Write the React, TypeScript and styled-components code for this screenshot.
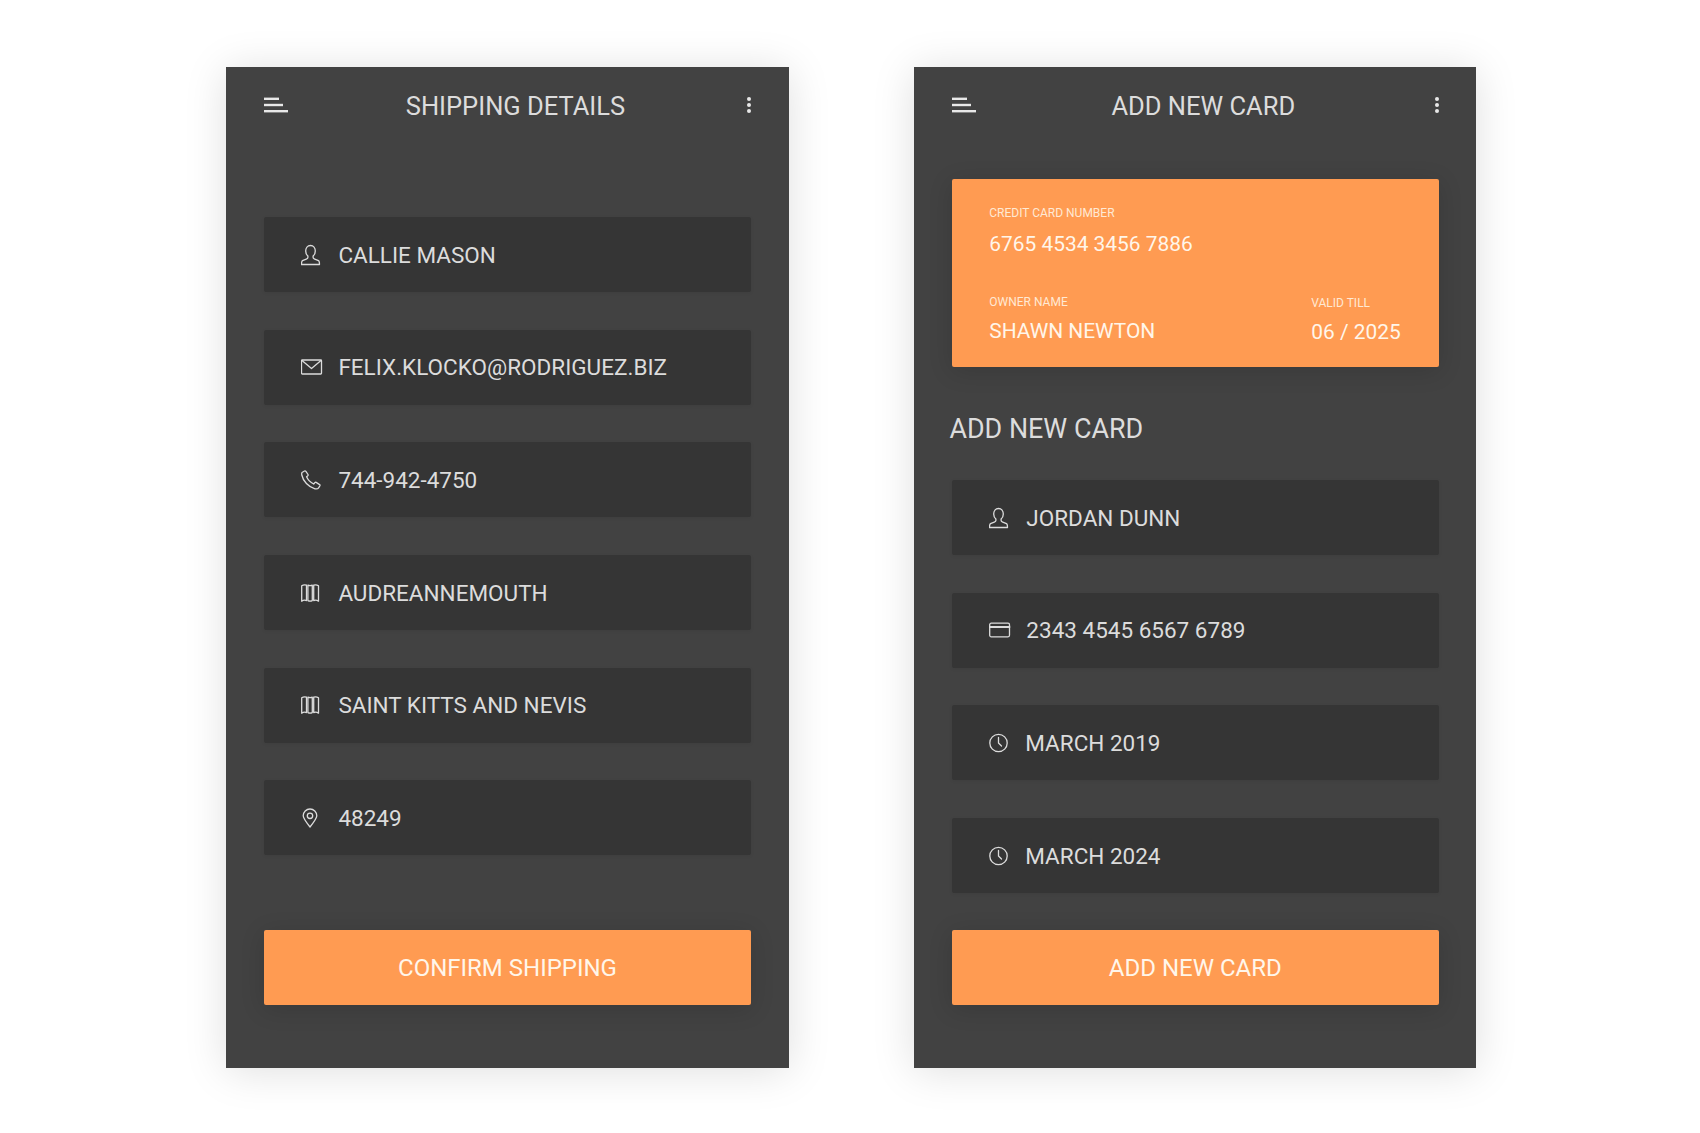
import * as React from 'react';
import { FC, ReactNode } from 'react';
import styled, { createGlobalStyle } from 'styled-components';

const GlobalStyle = createGlobalStyle`
    html, body {
        margin: 0;
        background: #ffffff;
    }

    body {
        font-family: Roboto, "Liberation Sans", sans-serif;
    }
`;

const Page = styled.div`
    box-sizing: border-box;
    height: 1133px;
    padding: 67px 0 0 226.4px;
    display: flex;
    align-items: flex-start;
    gap: 125.6px;
    overflow: hidden;
`;

const Phone = styled.section<{ $inset: number }>`
    box-sizing: border-box;
    width: 562.2px;
    height: 1001px;
    padding: 0 ${ props => props.$inset }px 63px;
    display: flex;
    flex-direction: column;
    background: #424242;
    box-shadow: 0 3px 40px rgba(0, 0, 0, 0.13);
`;

const Header = styled.header`
    flex: none;
    height: 76px;
    display: flex;
    align-items: center;
    justify-content: space-between;
    color: #e6e6e6;
`;

const Title = styled.h1`
    margin: 0;
    padding-top: 1px;
    font-size: 25.5px;
    font-weight: 400;
    color: #dcdcdc;
`;

const FieldList = styled.div<{ $top: number }>`
    margin-top: ${ props => props.$top }px;
    display: flex;
    flex-direction: column;
    gap: 37.7px;
`;

const FieldRow = styled.div`
    box-sizing: border-box;
    height: 75px;
    padding-left: 37.5px;
    display: flex;
    align-items: center;
    background: #353535;
    border-radius: 2px;
    color: #dcdcdc;
    font-size: 22.5px;
    box-shadow: 0 1px 4px rgba(0, 0, 0, 0.06);
`;

const IconSlot = styled.span<{ $width: number }>`
    flex: none;
    width: ${ props => props.$width }px;
    height: 24px;

    svg {
        display: block;
    }
`;

const ActionButton = styled.button`
    flex: none;
    height: 75px;
    margin-top: auto;
    padding: 0;
    border: none;
    border-radius: 2px;
    background: #ff9b52;
    color: #fff6ea;
    font-family: inherit;
    font-size: 24px;
    box-shadow: 0 4px 24px rgba(0, 0, 0, 0.14);
`;

const Card = styled.div`
    box-sizing: border-box;
    height: 187.5px;
    margin-top: 36px;
    padding: 27px 38px 0 37.5px;
    background: #ff9b52;
    border-radius: 2px;
    color: #fff6ea;
    box-shadow: 0 4px 24px rgba(0, 0, 0, 0.14);
`;

const CardRow = styled.div`
    margin-top: 38px;
    display: flex;
    justify-content: space-between;
`;

const CardColumn = styled.div<{ $drop?: number }>`
    padding-top: ${ props => props.$drop ?? 0 }px;
`;

const CardLabel = styled.div`
    font-size: 12px;
    line-height: 14px;
    color: #ffe9d4;
`;

const CardValue = styled.div<{ $gap: number }>`
    margin-top: ${ props => props.$gap }px;
    font-size: 20.9px;
    line-height: 25px;
`;

const SectionTitle = styled.h2`
    margin: 47px 0 0 -2.4px;
    height: 66.6px;
    font-size: 26.9px;
    line-height: 30px;
    font-weight: 400;
    color: #dcdcdc;
`;

const IconSvg: FC<{ children: ReactNode }> = ( { children } ) => (
    <svg width="24" height="24" viewBox="0 0 24 24" fill="none" stroke="currentColor" strokeWidth="1.3" strokeLinejoin="round" strokeLinecap="round">
        { children }
    </svg>
);

const PersonIcon = () => (
    <IconSvg>
        <path d="M9.5 2.5c-3 0-4.8 2.4-4.8 5.4 0 2.2 1 4 2.2 5v1.6c0 .8-.6 1.2-1.6 1.6l-3.8 1.5c-.9.4-1 1.2-1 3.9h18c0-2.7-.1-3.5-1-3.9l-3.8-1.5c-1-.4-1.6-.8-1.6-1.6v-1.6c1.2-1 2.2-2.8 2.2-5 0-3-1.8-5.4-4.8-5.4z"/>
    </IconSvg>
);

const MailIcon = () => (
    <IconSvg>
        <rect x=".5" y="5" width="20" height="14" rx=".8"/>
        <path d="M1 5.5l9.5 8 9.5-8"/>
    </IconSvg>
);

const PhoneIcon = () => (
    <IconSvg>
        <path d="M1 4.5L3.5 3q.8-.4 1.4.4L7 6.5q.4.7-.2 1.3L5.6 8.8q1.9 4.7 7.1 7.2l1.1-1.4q.6-.6 1.4-.2l3.4 2.2q.7.6.2 1.4l-1.2 1.8q-1.1 1.6-3.6 1C7.5 19 2 13 .8 7q-.3-1.5.2-2.5z"/>
    </IconSvg>
);

const MapIcon = () => (
    <IconSvg>
        <path d="M.7 4.8q2.4-1.6 4.8-.6v15.4q-2.4-1-4.8.6z"/>
        <path d="M6.9 4.2q2.2 1 4.4 0v15.4q-2.2 1-4.4 0z"/>
        <path d="M12.7 4.2q2.4-1 4.8.6v15.4q-2.4-1.6-4.8-.6z"/>
    </IconSvg>
);

const PinIcon = () => (
    <IconSvg>
        <path d="M9 21C5 16 2.2 12.5 2.2 9.8a6.8 6.8 0 0 1 13.6 0C15.8 12.5 13 16 9 21z"/>
        <circle cx="9" cy="9.8" r="2.7"/>
    </IconSvg>
);

const CardIcon = () => (
    <IconSvg>
        <rect x=".7" y="5.2" width="19.8" height="13.6" rx="1.5"/>
        <path d="M.7 9h19.8" strokeWidth="1.8"/>
    </IconSvg>
);

const ClockIcon = () => (
    <IconSvg>
        <circle cx="9.5" cy="12" r="8.7"/>
        <path d="M9.5 6.5V12l3 3"/>
    </IconSvg>
);

const MenuIcon = () => (
    <svg width="24" height="16" viewBox="0 0 24 16" fill="#e8e8e8">
        <rect x="0" y="0.6" width="15" height="2.4"/>
        <rect x="0" y="6.8" width="19" height="2.4"/>
        <rect x="0" y="13" width="24" height="2.4"/>
    </svg>
);

const DotsIcon = () => (
    <svg width="8" height="16" viewBox="0 0 8 16" fill="#e8e8e8">
        <circle cx="6" cy="2" r="2"/>
        <circle cx="6" cy="8" r="2"/>
        <circle cx="6" cy="14" r="2"/>
    </svg>
);

type FieldData = { icon: ReactNode; value: string; slot?: number };

const shippingFields: FieldData[] = [
    { icon: <PersonIcon/>, value: 'CALLIE MASON' },
    { icon: <MailIcon/>, value: 'FELIX.KLOCKO@RODRIGUEZ.BIZ' },
    { icon: <PhoneIcon/>, value: '744-942-4750' },
    { icon: <MapIcon/>, value: 'AUDREANNEMOUTH' },
    { icon: <MapIcon/>, value: 'SAINT KITTS AND NEVIS' },
    { icon: <PinIcon/>, value: '48249' },
];

const cardFields: FieldData[] = [
    { icon: <PersonIcon/>, value: 'JORDAN DUNN' },
    { icon: <CardIcon/>, value: '2343 4545 6567 6789' },
    { icon: <ClockIcon/>, value: 'MARCH 2019', slot: 36 },
    { icon: <ClockIcon/>, value: 'MARCH 2024', slot: 36 },
];

const Fields: FC<{ fields: FieldData[]; top: number }> = ( { fields, top } ) => (
    <FieldList $top={ top }>
        { fields.map( field => (
            <FieldRow key={ field.value }>
                <IconSlot $width={ field.slot ?? 37.1 }>{ field.icon }</IconSlot>
                { field.value }
            </FieldRow>
        ) ) }
    </FieldList>
);

const PhoneHeader: FC<{ title: string }> = ( { title } ) => (
    <Header>
        <MenuIcon/>
        <Title>{ title }</Title>
        <DotsIcon/>
    </Header>
);

const App: FC = () => (
    <Page>
        <GlobalStyle/>
        <Phone $inset={ 37.4 }>
            <PhoneHeader title="SHIPPING DETAILS"/>
            <Fields fields={ shippingFields } top={ 74 }/>
            <ActionButton>CONFIRM SHIPPING</ActionButton>
        </Phone>
        <Phone $inset={ 37.6 }>
            <PhoneHeader title="ADD NEW CARD"/>
            <Card>
                <CardLabel>CREDIT CARD NUMBER</CardLabel>
                <CardValue $gap={ 12 }>6765 4534 3456 7886</CardValue>
                <CardRow>
                    <CardColumn>
                        <CardLabel>OWNER NAME</CardLabel>
                        <CardValue $gap={ 10 }>SHAWN NEWTON</CardValue>
                    </CardColumn>
                    <CardColumn $drop={ 1 }>
                        <CardLabel>VALID TILL</CardLabel>
                        <CardValue $gap={ 10 }>06 / 2025</CardValue>
                    </CardColumn>
                </CardRow>
            </Card>
            <SectionTitle>ADD NEW CARD</SectionTitle>
            <Fields fields={ cardFields } top={ 0 }/>
            <ActionButton>ADD NEW CARD</ActionButton>
        </Phone>
    </Page>
);

export default App;
